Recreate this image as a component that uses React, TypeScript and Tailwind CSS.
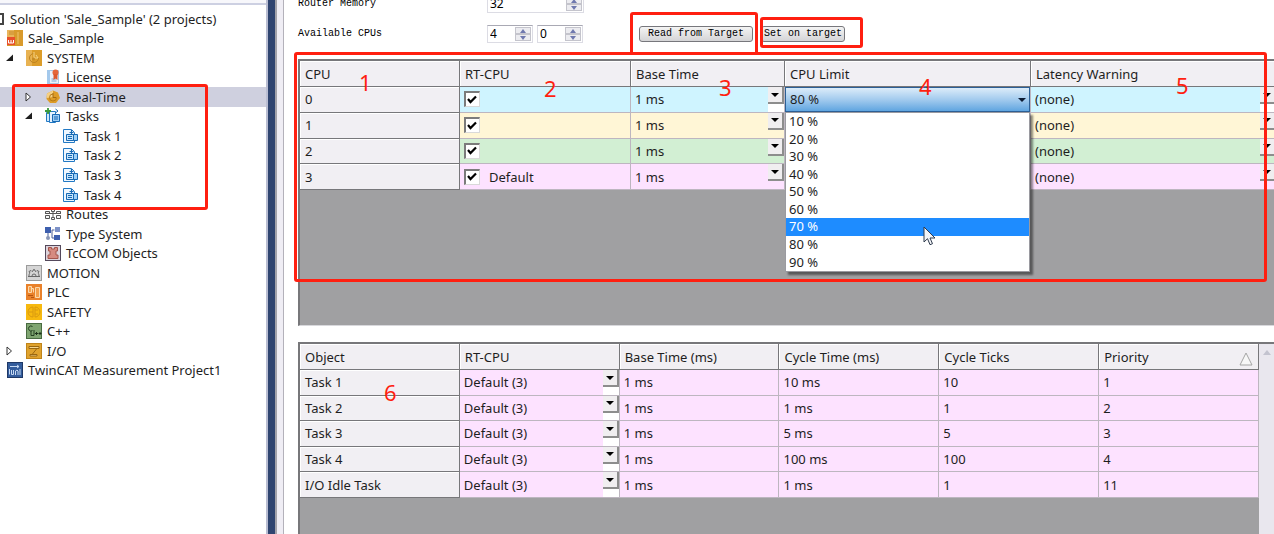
import React, { useState } from "react";
import clsx from "clsx";

// ─── Icons ───────────────────────────────────────────────────────────────────
type IconName =
  | "project" | "system" | "license" | "realtime" | "tasks" | "task" | "routes"
  | "types" | "tccom" | "motion" | "plc" | "safety" | "cpp" | "io" | "measure";

const ICONS: Record<IconName, React.ReactNode> = {
  project: (
    <>
      <rect width="16" height="16" fill="#d99a2b" />
      <path d="M0 0h7v8H0z" fill="#e9b45a" />
      <path d="M2 2h5M2 4h5" stroke="#c07d17" strokeWidth="0.8" />
      <rect x="0" y="7" width="8" height="8" fill="#e8502a" />
      <path d="M1.5 10v3h5v-3M4 10v3" stroke="#fff" strokeWidth="1" fill="none" />
      <path d="M11 2v12" stroke="#efc46c" strokeWidth="1" />
    </>
  ),
  system: (
    <>
      <rect width="16" height="16" fill="#dc9d2a" />
      <path d="M0 0h6v16H0z" fill="#e8b252" />
      <path d="M12.500 8a4.500 4.500 0 1 1-4.500-4.500" fill="none" stroke="#bd8322" strokeWidth="1" />
      <path d="M8 2v6h4l-2-3" fill="none" stroke="#f6d488" strokeWidth="1" />
      <circle cx="7.500" cy="9" r="1.500" fill="#c58a24" />
    </>
  ),
  license: (
    <>
      <path d="M2.500 1.500h11v13h-11z" fill="#eaf2fa" stroke="#a9c6e2" />
      <path d="M2 1h3v14H2z" fill="#a4c9ec" />
      <path d="M6.500 10h5M6.500 12h5" stroke="#7aa7d4" strokeWidth="1" />
      <circle cx="10.500" cy="3.500" r="3" fill="#e5673a" />
      <path d="M8.500 5v6l2-1.500 2 1.500V5z" fill="#dd5a2e" />
    </>
  ),
  realtime: (
    <>
      <path d="M8 1.500l5 2 2 5.500-4 5H5L1.500 10 2 4.500z" fill="#dd9c28" />
      <path d="M8 1.500v6.500L1.700 9 2 4.500z" fill="#f5d083" />
      <path d="M11.500 8.500a3.500 3.500 0 1 1-3.500-3.500" fill="none" stroke="#b67a18" strokeWidth="1" />
      <path d="M8 4v4.500h3" fill="none" stroke="#a46a10" strokeWidth="1" />
    </>
  ),
  tasks: (
    <>
      <path d="M1.500 4.500h6v9h-6z" fill="#cfe6fb" stroke="#2279c4" />
      <path d="M4.500 3.500h6v11h-6z" fill="#e6f3ff" stroke="#2279c4" />
      <path d="M7.500 6.500h7v7h-7z" fill="#9fd0f7" stroke="#1769b3" />
      <path d="M9 9h4M9 11h4" stroke="#1769b3" />
      <path d="M3 0v6M0 3h6" stroke="#3c9c3c" strokeWidth="1.800" />
      <path d="M10.500 1l2.500 2-2.500 2" fill="none" stroke="#1769b3" />
    </>
  ),
  task: (
    <>
      <path d="M.5 1.500h8l3 3v10H.5z" fill="#eef7ff" stroke="#2279c4" />
      <path d="M9.500 6.500h5v6h-5z" fill="#9fd0f7" stroke="#1769b3" />
      <path d="M3.500 6.500h7v6h-7z" fill="#c6e4fb" stroke="#1769b3" />
      <path d="M5 8.500h4M5 10.500h4" stroke="#1769b3" />
      <path d="M8.500 6V2M6.500 4.500h4" fill="none" stroke="#1769b3" strokeWidth="1.200" />
    </>
  ),
  routes: (
    <>
      <path d="M0 7.500h16M8 3.500v9" stroke="#555" />
      <path
        d="M.5 5.500h4v2h-4zM.5 9.500h4v3h-4zM6.500 2.500h3v3h-3zM11.500 5.500h4v2h-4zM11.500 9.500h4v3h-4zM6.500 11.500h3v2h-3z"
        fill="#f3f3f3"
        stroke="#555"
      />
    </>
  ),
  types: (
    <>
      <path d="M9.500 4H7v8h2.500M3 6v5" fill="none" stroke="#4a5f96" />
      <rect x="0" y="1" width="6" height="6" fill="#3e5fae" />
      <rect x="10" y="1" width="5" height="5" fill="#7d92c8" />
      <rect x="9" y="9" width="6" height="5" fill="#3e5fae" />
      <circle cx="3" cy="12" r="2" fill="#8a97b8" />
    </>
  ),
  tccom: (
    <>
      <rect x="0.500" y="0.500" width="15" height="15" fill="#dcd3da" stroke="#54495c" />
      <path
        d="M3.500 2.500h3v1.500h3V2.500h3V6H11v4h2v3.500H3V10h2V6H3.500z"
        fill="#d68b80"
        stroke="#a4564d"
      />
    </>
  ),
  motion: (
    <>
      <rect x="0.500" y="0.500" width="15" height="15" fill="#d5d5d5" stroke="#9b9b9b" />
      <path
        d="M2 11.500h12M3 11c0-2 .5-2.500 1-3l-1-1.500L5 5.500 6 6.500l1-.5.5-1.500h1L9 6l1 .5 1-1 2 1-1 1.500c.5.500 1 1 1 3M6 11a2 2 0 0 1 4 0"
        fill="none"
        stroke="#686868"
      />
    </>
  ),
  plc: (
    <>
      <rect width="16" height="16" fill="#e9812a" />
      <path d="M2.500 2.500h3v6h-3zM9.500 3.500h4v10h-4zM5.500 4.500h2v4" fill="#f4a04c" stroke="#fbd9ac" />
      <path d="M2 11.500h5M5 13.500h3" stroke="#b65510" />
    </>
  ),
  safety: (
    <>
      <rect width="16" height="16" fill="#f7b90f" />
      <path d="M7 3a5 5 0 0 0 0 10zM9 3a5 5 0 0 1 0 10z" fill="none" stroke="#d99a10" />
      <path d="M3 8h4M9 6h3M9 10h3" stroke="#d99a10" />
    </>
  ),
  cpp: (
    <>
      <rect x="0.500" y="0.500" width="15" height="15" fill="#7fa571" stroke="#496b41" />
      <path d="M6.500 3.500a2.500 2.500 0 1 0 0 4M5 8v4.500h3V7" fill="none" stroke="#233f20" />
      <path d="M9 10.500h3M10.500 9v3M12.500 10.500h3M14 9v3" stroke="#1d331b" />
    </>
  ),
  io: (
    <>
      <rect x="0.500" y="0.500" width="15" height="15" fill="#e0a32e" stroke="#c0841a" />
      <path d="M3 3.500h10v2H3zM10.500 6l-4 5M4 11.500h7v1.500H4z" fill="#f6d78f" stroke="#9a6710" />
    </>
  ),
  measure: (
    <>
      <rect x="0.500" y="0.500" width="15" height="15" fill="#335c9c" stroke="#1f3866" />
      <path d="M3 4.500h9M10 3l2 1.500L10 6" fill="none" stroke="#c6d9f3" />
      <path d="M2.500 12.500V7M4.500 8v4.500h2V8M8.500 13V9l1.500-1 1 1v4M13 13V7" fill="none" stroke="#c6d9f3" />
    </>
  ),
};

function Icon({ name }: { name: IconName }) {
  return (
    <svg viewBox="0 0 16 16" className="size-4 shrink-0" aria-hidden="true">
      {ICONS[name]}
    </svg>
  );
}

// ─── Solution tree ───────────────────────────────────────────────────────────
type TreeItem = {
  label: string;
  icon: IconName;
  level: 0 | 1 | 2 | 3;
  open?: boolean;
  selected?: boolean;
};

const TREE: TreeItem[] = [
  { label: "Sale_Sample", icon: "project", level: 0 },
  { label: "SYSTEM", icon: "system", level: 1, open: true },
  { label: "License", icon: "license", level: 2 },
  { label: "Real-Time", icon: "realtime", level: 2, open: false, selected: true },
  { label: "Tasks", icon: "tasks", level: 2, open: true },
  { label: "Task 1", icon: "task", level: 3 },
  { label: "Task 2", icon: "task", level: 3 },
  { label: "Task 3", icon: "task", level: 3 },
  { label: "Task 4", icon: "task", level: 3 },
  { label: "Routes", icon: "routes", level: 2 },
  { label: "Type System", icon: "types", level: 2 },
  { label: "TcCOM Objects", icon: "tccom", level: 2 },
  { label: "MOTION", icon: "motion", level: 1 },
  { label: "PLC", icon: "plc", level: 1 },
  { label: "SAFETY", icon: "safety", level: 1 },
  { label: "C++", icon: "cpp", level: 1 },
  { label: "I/O", icon: "io", level: 1, open: false },
  { label: "TwinCAT Measurement Project1", icon: "measure", level: 0 },
];

const INDENT = ["pl-[7px]", "pl-[6px]", "pl-[25px]", "pl-[43px]"];

function Expander({ open }: { open?: boolean }) {
  return (
    <span className="flex w-5 shrink-0">
      {open !== undefined && (
        <svg viewBox="0 0 8 10" className="h-[10px] w-2" aria-hidden="true">
          {open ? (
            <path d="M7 1.500v6.500H0z" fill="#1e1e1e" />
          ) : (
            <path d="M1 1l4.500 4L1 9z" fill="#fff" stroke="#333" />
          )}
        </svg>
      )}
    </span>
  );
}

function SolutionTree() {
  return (
    <aside className="flex w-[266px] shrink-0 flex-col bg-white">
      <div className="h-[5px] border-b-2 border-[#cdd0e2] bg-[#f7f7fb]" />
      <ul role="tree" className="mt-1 flex h-[371px] flex-col whitespace-nowrap">
        <li role="treeitem" className="flex flex-1 items-center">
          <span className="mr-[6px] h-3 w-1 border-2 border-l-0 border-[#444]" />
          Solution 'Sale_Sample' (2 projects)
        </li>
        {TREE.map((item) => (
          <li
            key={item.label}
            role="treeitem"
            aria-selected={!!item.selected}
            className={clsx("flex flex-1 items-center", INDENT[item.level], item.selected && "bg-[#cfd0df]")}
          >
            {item.level > 0 && <Expander open={item.open} />}
            <Icon name={item.icon} />
            <span className="ml-[5px]">{item.label}</span>
          </li>
        ))}
      </ul>
    </aside>
  );
}

// ─── Small controls ──────────────────────────────────────────────────────────
function Spinner({ label, value, wide }: { label: string; value: string; wide?: boolean }) {
  return (
    <div
      className={clsx(
        "flex h-[18px] shrink-0 border border-[#dcdce4] border-t-[#a9a9b4] bg-white p-px",
        wide ? "w-[97px]" : "w-[46px]",
      )}
    >
      <input aria-label={label} defaultValue={value} className="w-full min-w-0 flex-1 bg-transparent pl-px outline-none" />
      <div className="flex w-4 shrink-0 flex-col">
        <button aria-label={`${label} up`} className="flex flex-1 items-center justify-center border border-[#c4c4cc] bg-[#ececf0]">
          <svg viewBox="0 0 6 4" className="h-1 w-[6px]"><path d="M3 0l3 4H0z" fill="#6f78ae" /></svg>
        </button>
        <button aria-label={`${label} down`} className="flex flex-1 items-center justify-center border border-[#c4c4cc] bg-[#ececf0]">
          <svg viewBox="0 0 6 4" className="h-1 w-[6px]"><path d="M3 4l3-4H0z" fill="#6f78ae" /></svg>
        </button>
      </div>
    </div>
  );
}

const PUSH_BUTTON =
  "h-4 rounded-[3px] border border-[#77777c] bg-linear-to-b from-[#f4f4f4] to-[#d4d4d6] leading-none whitespace-nowrap";

// Cell-filling combo with the old raised arrow in the top right corner
function CellCombo({ label, value, strip }: { label: string; value: string; strip?: boolean }) {
  return (
    <>
      <select aria-label={label} defaultValue={value} className="block w-full appearance-none bg-transparent pl-1 outline-none">
        <option>{value}</option>
      </select>
      <span className={clsx("pointer-events-none absolute inset-y-0 right-0 w-4", strip && "bg-white")}>
        <span className="flex h-[17px] items-center justify-center border-r-2 border-b-2 border-[#8d8d8d] bg-[#f0eef0]">
          <svg viewBox="0 0 8 4" className="h-1 w-2"><path d="M0 0h8L4 4z" fill="#000" /></svg>
        </span>
      </span>
    </>
  );
}

function CheckCell({ label }: { label: string }) {
  return (
    <span className="grid size-4 shrink-0 place-items-center">
      <input
        id={label}
        type="checkbox"
        defaultChecked
        aria-label={label}
        className="col-start-1 row-start-1 size-4 appearance-none border border-t-2 border-l-2 border-[#d9d9d9] border-t-[#7b7b7b] border-l-[#7b7b7b] bg-white"
      />
      <svg viewBox="0 0 10 9" className="pointer-events-none col-start-1 row-start-1 h-[9px] w-[10px]">
        <path d="M1 4l2.500 3L9 1.500" fill="none" stroke="#000" strokeWidth="2.200" />
      </svg>
    </span>
  );
}

// ─── CPU grid ────────────────────────────────────────────────────────────────
const HEAD = "border-r border-b border-[#77777a] bg-[#f1eff3] text-left font-normal shadow-[inset_1px_1px_0_#fff]";
const CELL = "relative border-r border-b border-[#bdb6c0] p-0";

const CPUS = [
  { id: 0, tint: "bg-[#cff4ff]" },
  { id: 1, tint: "bg-[#fff6d6]" },
  { id: 2, tint: "bg-[#d2efd3]" },
  { id: 3, tint: "bg-[#fde2ff]", note: "Default" },
];

const LIMITS = ["10 %", "20 %", "30 %", "40 %", "50 %", "60 %", "70 %", "80 %", "90 %"];

function LimitCombo() {
  const [limit, setLimit] = useState("80 %");
  return (
    <>
      <select
        aria-label="CPU Limit"
        value={limit}
        onChange={(e) => setLimit(e.target.value)}
        className="absolute inset-0 w-full appearance-none border border-[#2c5f95] bg-linear-to-b from-[#dcecf9] via-[#a3cbee] to-[#5fa5e0] pl-1 outline-none"
      >
        {LIMITS.map((l) => (
          <option key={l}>{l}</option>
        ))}
      </select>
      <svg viewBox="0 0 8 4" className="pointer-events-none absolute top-[11px] right-1 h-1 w-2">
        <path d="M0 0h8L4 4z" fill="#0b1a33" />
      </svg>
      <ul
        role="listbox"
        className="absolute inset-x-0 top-full z-10 flex h-[160px] flex-col border border-[#9a9aa0] bg-white shadow-[3px_3px_2px_rgba(0,0,0,0.45)]"
      >
        {LIMITS.map((l) => (
          <li
            key={l}
            role="option"
            aria-selected={l === "70 %"}
            onClick={() => setLimit(l)}
            className={clsx("flex flex-1 items-center pl-[3px] leading-none", l === "70 %" && "bg-[#1e8cff] text-white")}
          >
            {l}
          </li>
        ))}
        <svg viewBox="0 0 13 20" className="pointer-events-none absolute top-[113px] left-[137px] h-5 w-[13px]">
          <path d="M1 1v15l3.500-3.300 2.500 6 2.500-1-2.500-5.700h5z" fill="#f2f4f8" stroke="#2f3a4c" />
        </svg>
      </ul>
    </>
  );
}

function CpuGrid() {
  return (
    <div className="h-[267px] shrink-0 overflow-hidden border-t-2 border-b border-l-2 border-[#77777a] border-b-[#d8d8dc] bg-[#a0a0a2]">
      <table className="h-[129px] w-[calc(100%+3px)] table-fixed border-separate border-spacing-0">
        <colgroup>
          <col className="w-[160px]" />
          <col className="w-[171px]" />
          <col className="w-[154px]" />
          <col className="w-[246px]" />
          <col />
        </colgroup>
        <thead>
          <tr className="h-[26px]">
            {["CPU", "RT-CPU", "Base Time", "CPU Limit", "Latency Warning"].map((h) => (
              <th key={h} className={clsx(HEAD, "px-[5px] py-0")}>{h}</th>
            ))}
          </tr>
        </thead>
        <tbody>
          {CPUS.map((cpu) => (
            <tr key={cpu.id}>
              <th scope="row" className={clsx(HEAD, "px-[5px] py-0")}>{cpu.id}</th>
              <td className={clsx(CELL, cpu.tint)}>
                <label className="flex items-center gap-[9px] pl-1">
                  <CheckCell label={`rt-cpu-${cpu.id}`} />
                  {cpu.note}
                </label>
              </td>
              <td className={clsx(CELL, cpu.tint)}>
                <CellCombo label={`Base time ${cpu.id}`} value="1 ms" strip={cpu.id === 0} />
              </td>
              <td className={clsx(CELL, cpu.tint)}>{cpu.id === 0 && <LimitCombo />}</td>
              <td className={clsx(CELL, cpu.tint)}>
                <CellCombo label={`Latency warning ${cpu.id}`} value="(none)" strip={cpu.id === 0} />
              </td>
            </tr>
          ))}
        </tbody>
      </table>
    </div>
  );
}

// ─── Task grid ───────────────────────────────────────────────────────────────
const TASKS = [
  { name: "Task 1", cycle: "10 ms", ticks: 10, priority: 1 },
  { name: "Task 2", cycle: "1 ms", ticks: 1, priority: 2 },
  { name: "Task 3", cycle: "5 ms", ticks: 5, priority: 3 },
  { name: "Task 4", cycle: "100 ms", ticks: 100, priority: 4 },
  { name: "I/O Idle Task", cycle: "1 ms", ticks: 1, priority: 11 },
];

function TaskGrid() {
  return (
    <div className="flex min-h-0 flex-1 overflow-hidden border-t-2 border-l-2 border-[#77777a] bg-[#a0a0a2]">
      <div className="min-w-0 flex-1">
        <table className="h-[154px] w-full table-fixed border-separate border-spacing-0">
          <thead>
            <tr className="h-[26px]">
              {["Object", "RT-CPU", "Base Time (ms)", "Cycle Time (ms)", "Cycle Ticks"].map((h) => (
                <th key={h} className={clsx(HEAD, "px-[5px] py-0")}>{h}</th>
              ))}
              <th className={clsx(HEAD, "px-[5px] py-0")}>
                <span className="flex items-center justify-between">
                  Priority
                  <svg viewBox="0 0 14 14" className="mt-1 size-[14px]">
                    <path d="M7 1l6 12H1z" fill="#f7f7f7" stroke="#a5a5a5" />
                  </svg>
                </span>
              </th>
            </tr>
          </thead>
          <tbody>
            {TASKS.map((t) => (
              <tr key={t.name}>
                <th scope="row" className={clsx(HEAD, "px-[5px] py-0")}>{t.name}</th>
                <td className={clsx(CELL, "bg-[#fde2ff]")}>
                  <CellCombo label={`${t.name} CPU`} value="Default (3)" strip />
                </td>
                <td className={clsx(CELL, "bg-[#fde2ff]")}><span className="pl-1">1 ms</span></td>
                <td className={clsx(CELL, "bg-[#fde2ff]")}><span className="pl-1">{t.cycle}</span></td>
                <td className={clsx(CELL, "bg-[#fde2ff]")}><span className="pl-1">{t.ticks}</span></td>
                <td className={clsx(CELL, "bg-[#fde2ff]")}><span className="pl-1">{t.priority}</span></td>
              </tr>
            ))}
          </tbody>
        </table>
      </div>
      <div className="flex w-[15px] shrink-0 justify-center bg-[#e9e7ee] pt-[6px]">
        <svg viewBox="0 0 8 5" className="h-[5px] w-2"><path d="M4 0l4 5H0z" fill="#c3c3cf" /></svg>
      </div>
    </div>
  );
}

// ─── Callouts ────────────────────────────────────────────────────────────────
const BOXES = [
  "left-[12px] top-[84px] w-[196px] h-[126px]",
  "left-[630px] top-[12px] w-[128px] h-[43px]",
  "left-[760px] top-[17px] w-[103px] h-[31px]",
  "left-[294px] right-[7px] top-[52px] h-[230px]",
];

const MARKS = [
  { n: 1, at: "left-[359px] top-[70px]" },
  { n: 2, at: "left-[544px] top-[76px]" },
  { n: 3, at: "left-[719px] top-[75px]" },
  { n: 4, at: "left-[919px] top-[74px]" },
  { n: 5, at: "left-[1176px] top-[73px]" },
  { n: 6, at: "left-[384px] top-[380px]" },
];

function Callouts() {
  return (
    <div className="pointer-events-none absolute inset-0 z-20">
      {BOXES.map((b) => (
        <div key={b} className={clsx("absolute rounded-[3px] border-3 border-[#ff1f10]", b)} />
      ))}
      {MARKS.map((m) => (
        <span key={m.n} className={clsx("absolute text-[22px] leading-6 text-[#ff1f10]", m.at)}>{m.n}</span>
      ))}
    </div>
  );
}

// ─── App ─────────────────────────────────────────────────────────────────────
export default function App() {
  return (
    <div className="relative flex h-screen overflow-hidden bg-white font-['Noto_Sans',sans-serif] text-[13px] leading-[18px] text-[#1e1e1e]">
      <SolutionTree />
      <div className="w-[11px] shrink-0 border-r-2 border-l-2 border-r-[#a3a2aa] border-l-[#b9bdd2] bg-[#2f4470]" />
      <div className="w-[7px] shrink-0 border-r border-[#b3b1ba] bg-[#efedf4]" />

      <main className="flex min-w-0 flex-1 flex-col pl-[14px]">
        <div className="-mt-[5px] mb-4 flex flex-col gap-3 font-['Liberation_Mono',monospace] text-[10px] text-black">
          <div className="flex items-center">
            <span className="w-[189px]">Router Memory</span>
            <div className="font-['Noto_Sans',sans-serif] text-[12px] leading-[14px]">
              <Spinner label="Router Memory" value="32" wide />
            </div>
          </div>
          <div className="flex items-center">
            <span className="w-[189px]">Available CPUs</span>
            <div className="flex gap-1 font-['Noto_Sans',sans-serif] text-[12px] leading-[14px]">
              <Spinner label="Shared CPUs" value="4" />
              <Spinner label="Isolated CPUs" value="0" />
            </div>
            <button className={clsx(PUSH_BUTTON, "ml-14 w-[114px]")}>Read from Target</button>
            <button className={clsx(PUSH_BUTTON, "ml-2 w-[84px]")}>Set on target</button>
          </div>
        </div>
        <CpuGrid />
        <div className="h-4 shrink-0" />
        <TaskGrid />
      </main>

      <Callouts />
    </div>
  );
}
